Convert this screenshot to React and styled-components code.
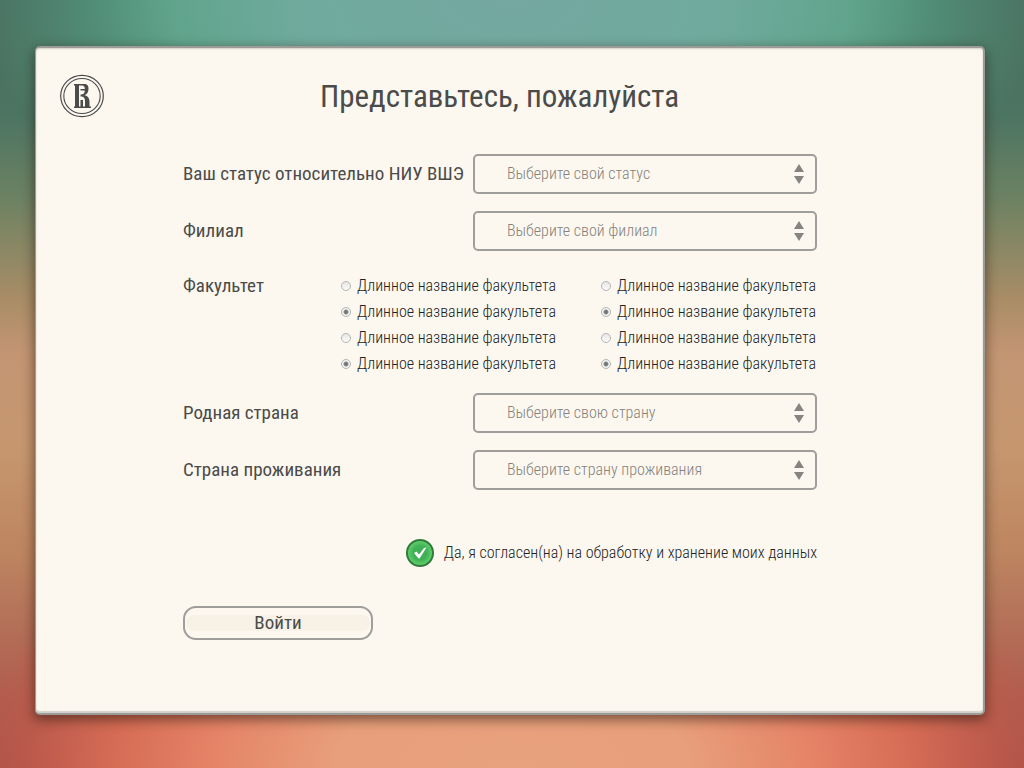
import React from "react";
import styled, { createGlobalStyle } from "styled-components";

const fontStack = `"Roboto Condensed", Roboto, sans-serif`;

const GlobalStyle = createGlobalStyle`
  *, *::before, *::after { box-sizing: border-box; }
  body {
    margin: 0;
    color: #4b4b4a;
    font-family: ${fontStack};
  }
`;

const Page = styled.main`
  display: grid;
  min-height: 100vh;
  padding: 46px 39px 53px 35px;
  background:
    radial-gradient(ellipse 52% 36% at 50% 0, #74a8a1 0%, #70aa9d 40%, #60a48c 64%, rgba(82, 146, 122, 0.8) 80%, rgba(74, 110, 94, 0) 100%),
    radial-gradient(ellipse 54% 36% at 50% 100%, #e8a27e 0%, #e89f7b 32%, #e58468 54%, #d66c55 72%, rgba(195, 92, 76, 0.6) 88%, rgba(173, 80, 73, 0) 100%),
    linear-gradient(180deg, #4a6f60 0%, #4c7462 15%, #6d8262 26%, #a98d67 39%, #c39573 46%, #c6976f 58%, #bd8560 72%, #b5735a 80%, #ae5c4e 91%, #ab5049 100%);
`;

const Card = styled.section`
  display: grid;
  grid-template-columns: 148px minmax(0, 1fr) 168px;
  grid-template-rows: auto 1fr;
  background: #fcf8f0;
  border: 2px solid #9d9b97;
  border-left-width: 1px;
  border-radius: 5px;
  box-shadow:
    inset 0 -2px 1px #d2d0ca,
    inset 0 1px 2px #d2d0ca,
    0 4px 12px 1px rgba(40, 25, 15, 0.55);
`;

const Logo = styled.svg`
  width: 44px;
  height: 44px;
  margin: 26px 0 0 24px;
`;

const Title = styled.h1`
  margin: 29px 0 0;
  font-size: 31px;
  line-height: 40px;
  font-weight: 400;
  text-align: center;
`;

const Form = styled.form`
  grid-column: 2;
  display: flex;
  flex-direction: column;
  margin: 36px -2px 0 -1px;
`;

const Field = styled.div`
  display: flex;
  align-items: center;
  justify-content: space-between;
  margin-bottom: 17px;
`;

const Label = styled.label`
  font-size: 19px;
  line-height: 24px;
  white-space: nowrap;
`;

const SelectBox = styled.div`
  display: grid;
  flex: none;
  align-items: center;
  width: 344px;
  & > * { grid-area: 1 / 1; }
`;

const Select = styled.select`
  width: 100%;
  height: 40px;
  padding: 0 40px 0 32px;
  appearance: none;
  background: transparent;
  border: 2px solid #9f9e9b;
  border-radius: 5px;
  color: #85827c;
  font: 300 16px/24px ${fontStack};
`;

const Arrows = styled.svg`
  width: 10px;
  height: 20px;
  justify-self: end;
  margin-right: 13px;
  pointer-events: none;
`;

const Faculty = styled.fieldset`
  display: grid;
  grid-template-columns: minmax(0, 1fr) 476px;
  margin: 6px 0 17px;
  padding: 0;
  border: 0;
`;

const Legend = styled.legend`
  float: left;
  padding: 0;
  font-size: 19px;
  line-height: 24px;
`;

const Options = styled.div`
  grid-column: 2;
  display: grid;
  grid-template-columns: 216px 216px;
  justify-content: space-between;
  row-gap: 2px;
`;

const Option = styled.label`
  display: flex;
  align-items: center;
  gap: 6px;
  color: #222221;
  font-size: 16px;
  font-weight: 300;
  line-height: 24px;
  white-space: nowrap;
`;

const Radio = styled.input`
  flex: none;
  width: 10px;
  height: 10px;
  margin: 0;
  appearance: none;
  border: 1px solid #b5b4b1;
  border-radius: 50%;
  background: linear-gradient(#e6e6e4, #fdfdfc);
  &:checked {
    background: radial-gradient(circle, #6c7173 0 1px, #8b8f90 2px, #f4f4f3 3px);
  }
`;

const Consent = styled.label`
  display: flex;
  align-items: center;
  justify-content: flex-end;
  gap: 10px;
  margin-top: 32px;
  color: #222221;
  font-size: 16px;
  font-weight: 300;
  line-height: 28px;
  white-space: nowrap;
`;

const TickBox = styled.span`
  display: grid;
  width: 28px;
  height: 28px;
  & > * { grid-area: 1 / 1; }
`;

const Tick = styled.input`
  width: 28px;
  height: 28px;
  margin: 0;
  appearance: none;
  border: 2px solid #327a3d;
  border-radius: 50%;
  background: radial-gradient(circle, #3fb055 0 40%, #5dcc69 68%);
`;

const TickMark = styled.svg`
  width: 28px;
  height: 28px;
  pointer-events: none;
  ${Tick}:not(:checked) + & { visibility: hidden; }
`;

const Submit = styled.button`
  align-self: flex-start;
  width: 190px;
  height: 34px;
  margin: 39px 0 60px;
  padding: 7px 1px;
  border: 2px solid #9f9e9b;
  border-radius: 13px;
  background: #fcf8f0;
  color: #4b4b4a;
  font: 19px/16px ${fontStack};
`;

const Band = styled.span`
  display: block;
  border-radius: 8px;
  background: #f7f1e6;
`;

function SelectField({ id, label, placeholder }) {
  return (
    <Field>
      <Label htmlFor={id}>{label}</Label>
      <SelectBox>
        <Select id={id} defaultValue="">
          <option value="">{placeholder}</option>
        </Select>
        <Arrows viewBox="0 0 10 20" aria-hidden="true">
          <path d="M5 0L10 8H0ZM0 12H10L5 20Z" fill="#858481" />
        </Arrows>
      </SelectBox>
    </Field>
  );
}

const faculties = [false, false, true, true, false, false, true, true];

export default function App() {
  return (
    <>
      <GlobalStyle />
      <Page>
        <Card>
          <Logo viewBox="0 0 44 44" role="img" aria-label="НИУ ВШЭ">
            <g fill="none" stroke="#4b4b4a">
              <ellipse cx="22" cy="22" rx="21.3" ry="20.7" strokeWidth="1.2" />
              <ellipse cx="22" cy="22" rx="18.2" ry="17.5" strokeWidth="1.1" />
            </g>
            <path
              fill="#4b4b4a"
              d="M14 10H24C27.500 10 28.500 12 28.500 14.800C28.500 18 27 20.500 24.500 21.300C28 22 29.500 24.500 29.500 28V32.500H31V34H14V32.500H15V11.500H14ZM19 11.500V32.500H20.500V26H23V32.500H25V27C25 24.500 24 22.500 20.500 22.500V20.500C23.500 20.500 24.500 19.500 24.800 16.500H20.500V15H24.800C24.800 12.800 24 11.500 22 11.500Z"
            />
          </Logo>
          <Title>Представьтесь, пожалуйста</Title>
          <Form onSubmit={(event) => event.preventDefault()}>
            <SelectField id="status" label="Ваш статус относительно НИУ ВШЭ" placeholder="Выберите свой статус" />
            <SelectField id="branch" label="Филиал" placeholder="Выберите свой филиал" />
            <Faculty>
              <Legend>Факультет</Legend>
              <Options>
                {faculties.map((checked, index) => (
                  <Option key={index}>
                    <Radio type="radio" name={`faculty-${index}`} defaultChecked={checked} />
                    Длинное название факультета
                  </Option>
                ))}
              </Options>
            </Faculty>
            <SelectField id="homeland" label="Родная страна" placeholder="Выберите свою страну" />
            <SelectField id="residence" label="Страна проживания" placeholder="Выберите страну проживания" />
            <Consent>
              <TickBox>
                <Tick type="checkbox" defaultChecked />
                <TickMark viewBox="0 0 28 28" aria-hidden="true">
                  <path d="M8 14L10.500 12.500L13 15.500L18 9L20.500 8.500L13.500 19.500H12.500Z" fill="#fff" />
                </TickMark>
              </TickBox>
              Да, я согласен(на) на обработку и хранение моих данных
            </Consent>
            <Submit type="submit">
              <Band>Войти</Band>
            </Submit>
          </Form>
        </Card>
      </Page>
    </>
  );
}
